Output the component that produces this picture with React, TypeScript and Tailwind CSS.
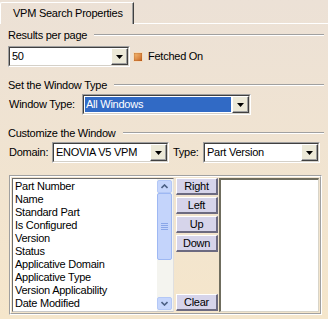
import React from 'react';

const leftItems = [
  'Part Number',
  'Name',
  'Standard Part',
  'Is Configured',
  'Version',
  'Status',
  'Applicative Domain',
  'Applicative Type',
  'Version Applicability',
  'Date Modified',
];

function Arrow() {
  return (
    <svg width="7" height="4" viewBox="0 0 7 4">
      <path d="M0 0h7L3.5 4z" fill="#000" />
    </svg>
  );
}

function Combo({ value, className, selected }: { value: string; className: string; selected?: boolean }) {
  return (
    <div className={'h-[21px] border-t border-l border-[#a0a0a0] border-r border-b border-r-white border-b-white ' + className}>
      <div className="flex h-full border-t border-l border-[#404040] border-r border-b border-r-[#d4d0c8] border-b-[#d4d0c8] bg-white">
        <div className="flex flex-1 items-center pl-[1px] pr-[1px]">
          <span
            className={
              selected
                ? 'flex h-[15px] w-full items-center bg-[#316ac5] pl-[1px] text-white'
                : 'flex h-[15px] w-full items-center pl-[1px] text-black'
            }
          >
            {value}
          </span>
        </div>
        <div className="flex w-[17px] items-center justify-center border-t border-l border-white border-r border-b border-r-[#404040] border-b-[#404040] bg-[#ece9d8] shadow-[inset_-1px_-1px_0_#a0a0a0]">
          <Arrow />
        </div>
      </div>
    </div>
  );
}

function GroupHeader({ label }: { label: string }) {
  return (
    <div className="flex h-[14px] items-center gap-[7px] pr-[4px]">
      <span className="leading-[14px]">{label}</span>
      <div className="h-[2px] flex-1 border-t border-[#a0a0a0] border-b border-b-white" />
    </div>
  );
}

function Chevron({ up }: { up?: boolean }) {
  return (
    <svg width="7" height="5" viewBox="0 0 7 5">
      <path
        d={up ? 'M0.5 4L3.5 1L6.5 4' : 'M0.5 1L3.5 4L6.5 1'}
        fill="none"
        stroke="#4d6185"
        strokeWidth="1.6"
      />
    </svg>
  );
}

function SideButton({ label }: { label: string }) {
  return (
    <div className="flex h-[17px] items-center justify-center border-t border-l border-white border-r-2 border-b-2 border-r-[#6c6a80] border-b-[#6c6a80] bg-[#d6d4ea] leading-none">
      {label}
    </div>
  );
}

export default function App() {
  return (
    <div className="h-[319px] w-[328px] overflow-hidden bg-linear-to-b from-[#ece1d6] to-[#f5e6cb] font-['Liberation_Sans',Arial,sans-serif] text-[11px] tracking-[-0.25px] text-black">
      {/* tab strip */}
      <div className="flex h-[24px]">
        <div className="mt-[2px] flex h-[22px] w-[134px] items-center rounded-tl-[2px] border-t border-l border-white border-r border-r-[#404040] pl-[12px] shadow-[inset_-1px_0_0_#a0a0a0]">
          VPM Search Properties
        </div>
        <div className="flex-1 border-b border-white" />
      </div>

      <div className="pl-[8px]">
        <div className="mt-[4px]">
          <GroupHeader label="Results per page" />
        </div>
        <div className="mt-[4px] flex items-center">
          <Combo value="50" className="w-[122px]" />
          <div className="ml-[3px] h-[10px] w-[10px] border border-[#f4dcc0] bg-linear-to-br from-[#f8c27a] to-[#c8641c] shadow-[inset_0_0_2px_#a04a10]" />
          <span className="ml-[5px]">Fetched On</span>
        </div>

        <div className="mt-[11px]">
          <GroupHeader label="Set the Window Type" />
        </div>
        <div className="mt-[2px] flex items-center">
          <span className="ml-[1px] w-[73px]">Window Type:</span>
          <Combo value="All Windows" className="w-[169px]" selected />
        </div>

        <div className="mt-[11px]">
          <GroupHeader label="Customize the Window" />
        </div>
        <div className="mt-[2px] flex items-center">
          <span className="ml-[1px] w-[43px]">Domain:</span>
          <Combo value="ENOVIA V5 VPM" className="w-[117px]" />
          <span className="ml-[4px] w-[30px]">Type:</span>
          <Combo value="Part Version" className="w-[117px]" />
        </div>

        {/* list panel */}
        <div className="mt-[12px] ml-[1px] h-[140px] w-[313px] border border-[#a0a0a0] border-r-white border-b-white">
          <div className="flex h-full border border-white border-r-[#a0a0a0] border-b-[#a0a0a0] py-[1px] pl-[1px]">
            <div className="flex w-[162px] border border-[#6b6b6b] border-r-[#e0e0e0] border-b-[#c8c8c8] bg-white">
              <div className="flex-1 pl-[2px] pt-[1px]">
                {leftItems.map((item) => (
                  <div key={item} className="h-[13px] leading-[13px] whitespace-nowrap">
                    {item}
                  </div>
                ))}
              </div>
              <div className="flex w-[16px] flex-col bg-[#f4f4ef] py-[1px] pr-[1px]">
                <div className="flex h-[13px] items-center justify-center rounded-[2px] border border-[#b4c8f6] bg-[#c6d6fc]">
                  <Chevron up />
                </div>
                <div className="flex h-[67px] flex-col items-center justify-center gap-[1px] rounded-[2px] border border-[#9eb8f3] bg-[#c4d4fb]">
                  <div className="h-[1px] w-[7px] bg-[#8aa6e8]" />
                  <div className="h-[1px] w-[7px] bg-[#8aa6e8]" />
                  <div className="h-[1px] w-[7px] bg-[#8aa6e8]" />
                  <div className="h-[1px] w-[7px] bg-[#8aa6e8]" />
                </div>
                <div className="flex-1" />
                <div className="flex h-[13px] items-center justify-center rounded-[2px] border border-[#b4c8f6] bg-[#c6d6fc]">
                  <Chevron />
                </div>
              </div>
            </div>

            <div className="flex w-[45px] flex-col gap-[2px] pl-[2px] pr-[1px] pb-[1px]">
              <SideButton label="Right" />
              <SideButton label="Left" />
              <SideButton label="Up" />
              <SideButton label="Down" />
              <div className="flex-1" />
              <SideButton label="Clear" />
            </div>

            <div className="mr-[1px] flex-1 border-t-2 border-l-2 border-[#6f6d5e] border-r border-b border-r-[#d8d4c8] border-b-[#d8d4c8] bg-white" />
          </div>
        </div>
      </div>
    </div>
  );
}
